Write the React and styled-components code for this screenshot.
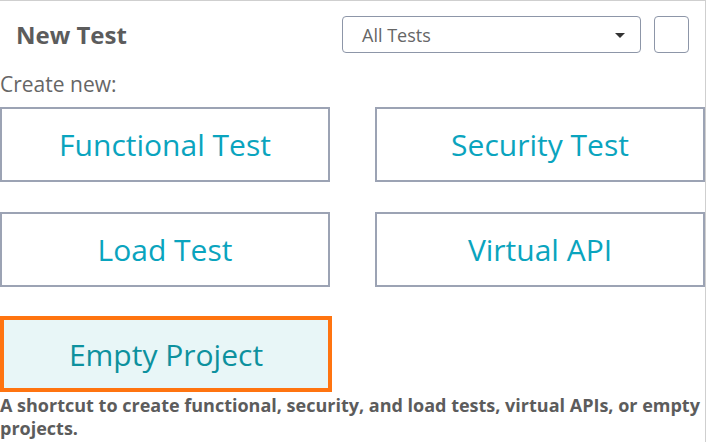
import React from 'react'
import styled, {createGlobalStyle} from 'styled-components'

const GlobalStyle = createGlobalStyle`
    html, body {
        margin: 0;
        padding: 0;
        background: #fff;
    }
    body {
        font-family: "Open Sans", "Noto Sans", sans-serif;
    }
`

const Panel = styled.div`
    width: 705px;
    height: 441px;
    border-top: 1px solid #cfcfcf;
    border-right: 1px solid #cfcfcf;
    overflow: hidden;
`

const Header = styled.div`
    display: flex;
    align-items: center;
    padding: 15px 16px 0 16px;
    height: 37px;
`

const Title = styled.h1`
    flex: 1;
    margin: 0;
    font-size: 24px;
    font-weight: 700;
    color: #5c5c5c;
`

const Select = styled.div`
    position: relative;
    box-sizing: border-box;
    width: 299px;
    height: 37px;
    border: 1px solid #8d96a8;
    border-radius: 4px;
    display: flex;
    align-items: center;
    padding-left: 19px;
    font-size: 18px;
    color: #666;
`

const Caret = styled.span`
    position: absolute;
    right: 15px;
    top: 16px;
    width: 0;
    height: 0;
    border-left: 5px solid transparent;
    border-right: 5px solid transparent;
    border-top: 5px solid #333;
`

const IconButton = styled.div`
    box-sizing: border-box;
    width: 35px;
    height: 37px;
    margin-left: 13px;
    border: 1px solid #8d96a8;
    border-radius: 4px;
`

const Label = styled.div`
    margin-top: 18px;
    font-size: 21px;
    line-height: 26px;
    color: #666;
`

const Grid = styled.div`
    display: grid;
    grid-template-columns: 330px 330px;
    grid-auto-rows: 75px;
    column-gap: 45px;
    row-gap: 30px;
    margin-top: 10px;
`

const Tile = styled.button`
    box-sizing: border-box;
    margin: 0;
    padding: 0;
    border: ${(p) => (p.$active ? '4px solid #ff7410' : '2px solid #9ca3b4')};
    width: ${(p) => (p.$active ? '332px' : '330px')};
    margin-top: ${(p) => (p.$active ? '-1px' : '0')};
    background: ${(p) => (p.$active ? '#e8f6f7' : '#fff')};
    color: ${(p) => (p.$active ? '#0d919e' : '#0aa4be')};
    font-family: "Open Sans", "Noto Sans", sans-serif;
    font-size: 30px;
    font-weight: 400;
    cursor: pointer;
`

const Description = styled.p`
    margin: 2px 0 0 0;
    font-size: 18px;
    line-height: 23px;
    font-weight: 700;
    color: #5c5c5c;
`

const tiles = ['Functional Test', 'Security Test', 'Load Test', 'Virtual API', 'Empty Project']

function App() {
    return (
        <>
            <GlobalStyle />
            <Panel>
                <Header>
                    <Title>New Test</Title>
                    <Select>
                        All Tests
                        <Caret />
                    </Select>
                    <IconButton />
                </Header>
                <Label>Create new:</Label>
                <Grid>
                    {tiles.map((t) => (
                        <Tile key={t} $active={t === 'Empty Project'}>{t}</Tile>
                    ))}
                </Grid>
                <Description>
                    A shortcut to create functional, security, and load tests, virtual APIs, or empty projects.
                </Description>
            </Panel>
        </>
    )
}

export default App
